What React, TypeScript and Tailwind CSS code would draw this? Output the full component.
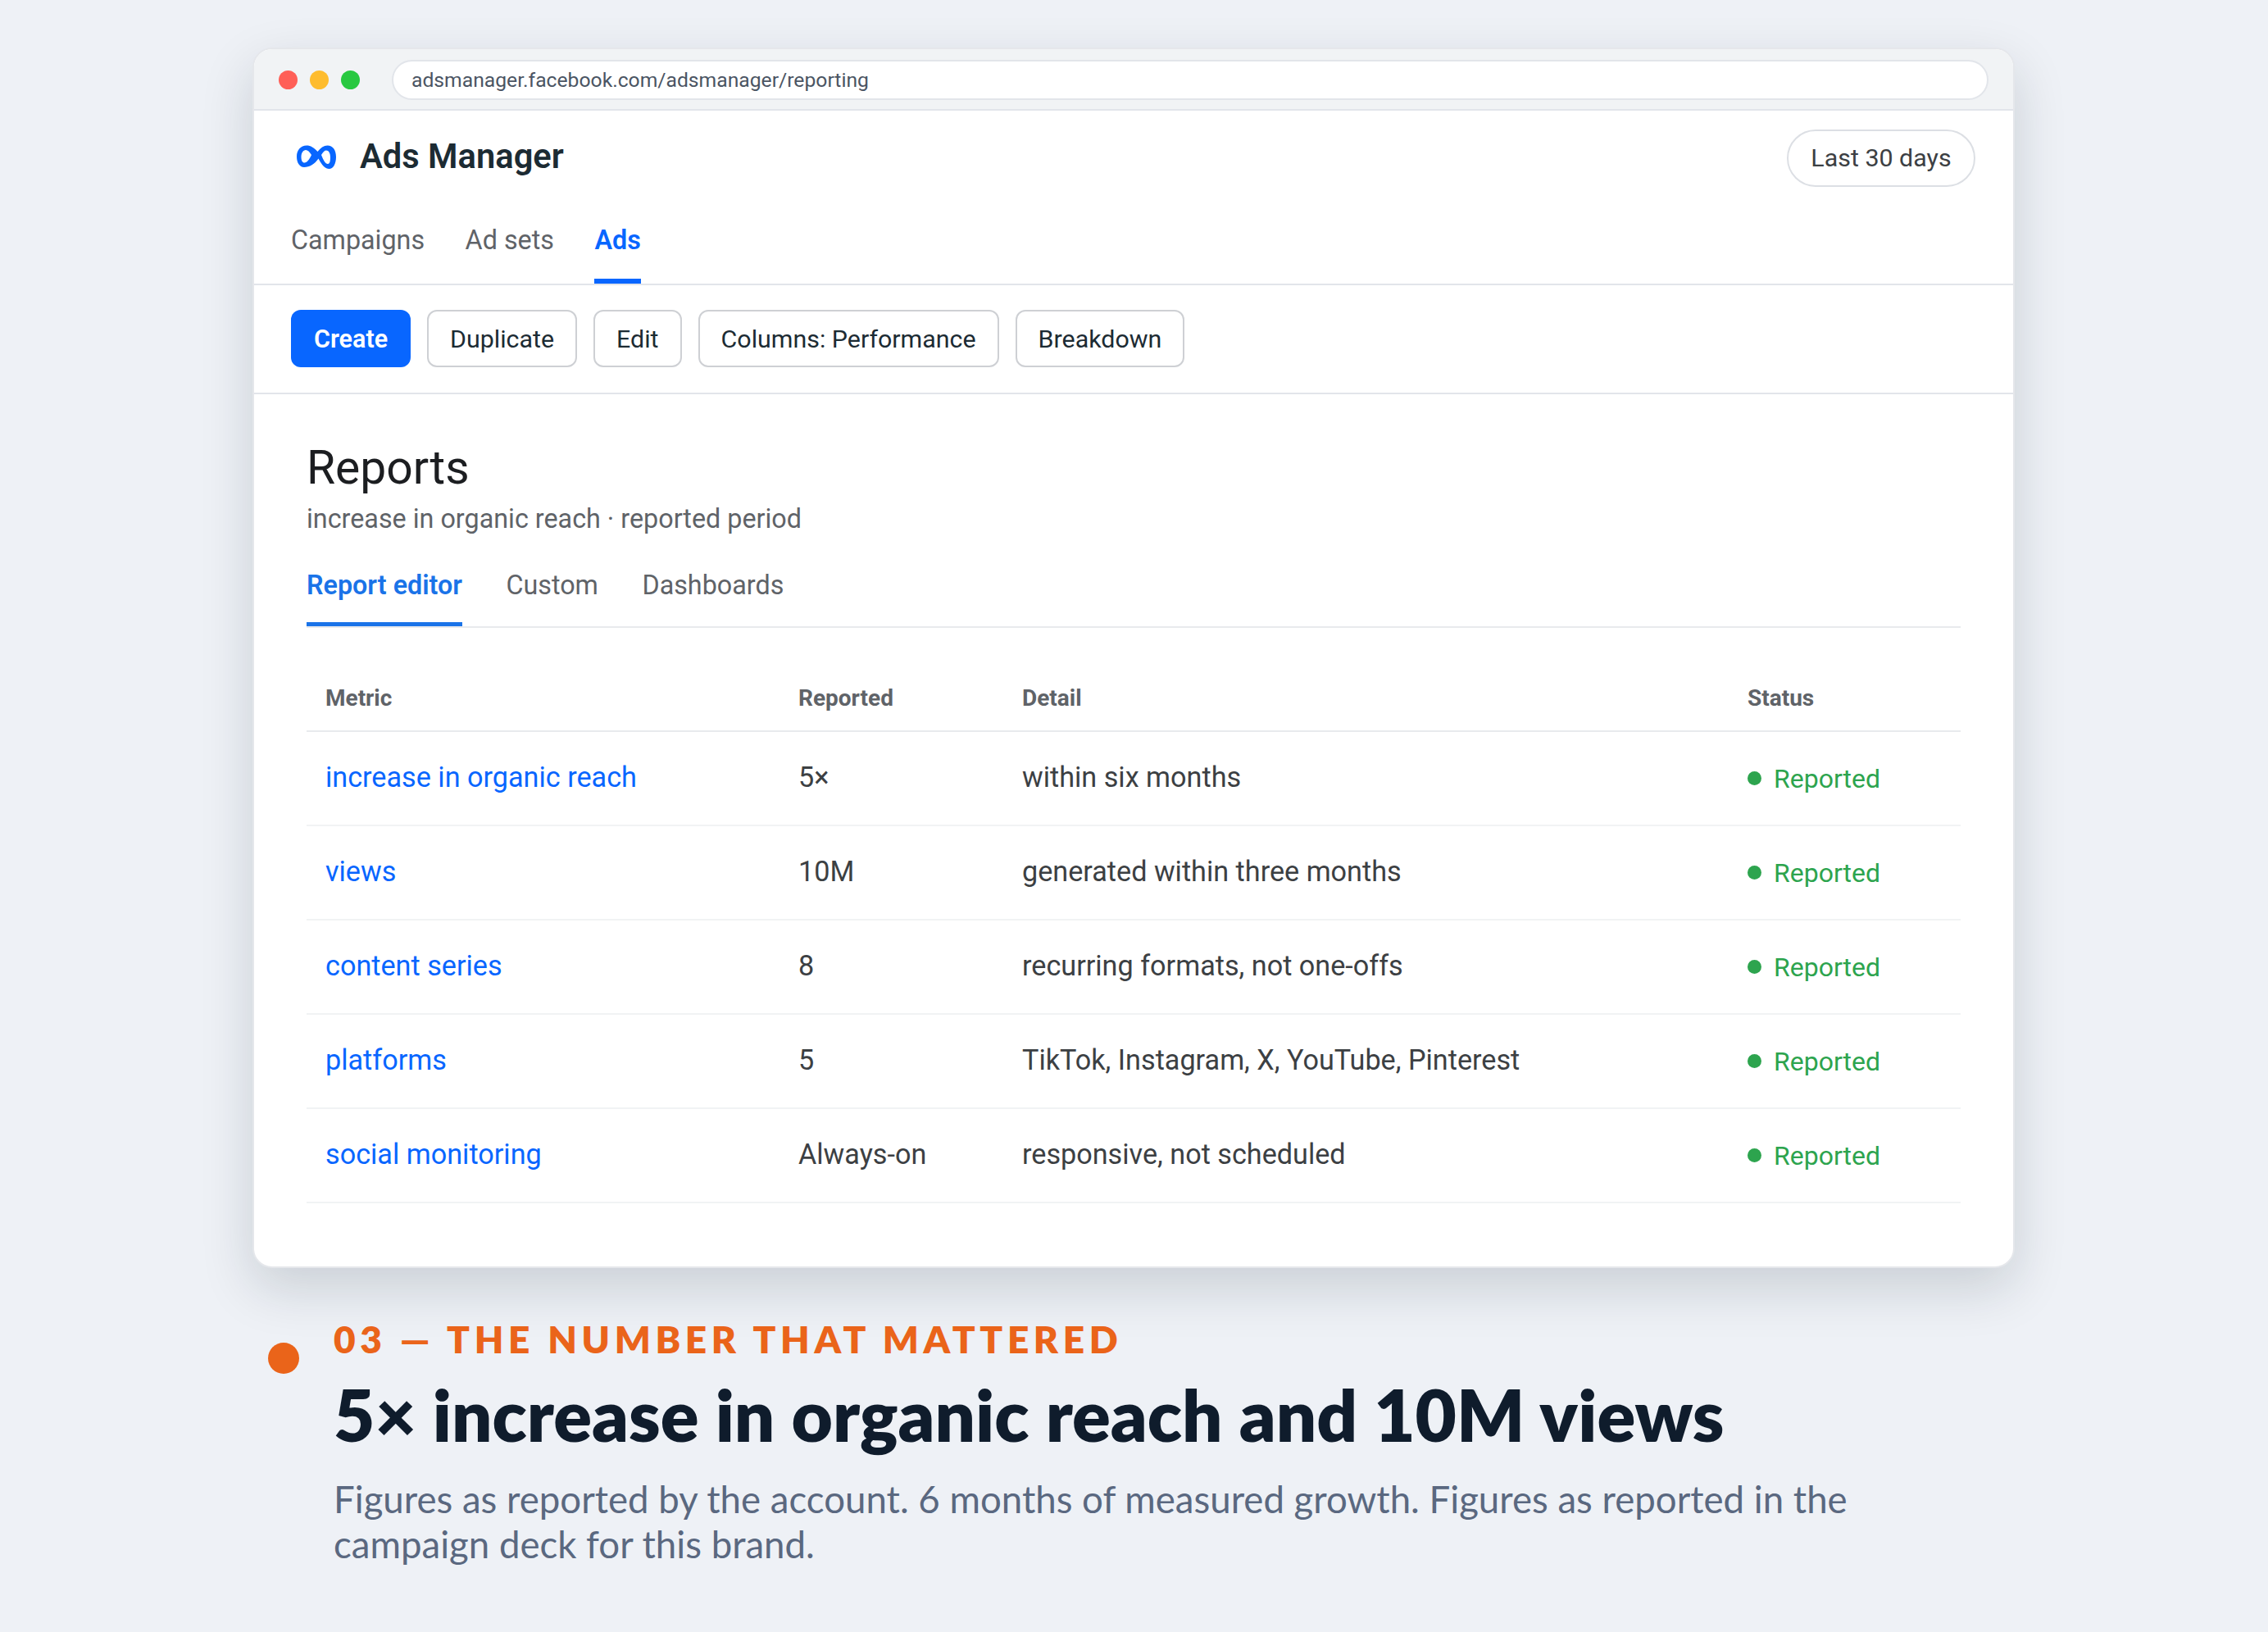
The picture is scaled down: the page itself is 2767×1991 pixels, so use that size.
const tabs = ["Campaigns", "Ad sets"];
const actions = ["Duplicate", "Edit", "Columns: Performance", "Breakdown"];

const rows = [
  { metric: "increase in organic reach", reported: "5×", detail: "within six months" },
  { metric: "views", reported: "10M", detail: "generated within three months" },
  { metric: "content series", reported: "8", detail: "recurring formats, not one-offs" },
  { metric: "platforms", reported: "5", detail: "TikTok, Instagram, X, YouTube, Pinterest" },
  { metric: "social monitoring", reported: "Always-on", detail: "responsive, not scheduled" },
];

function MetaLogo() {
  return (
    <svg viewBox="0 0 48 29" className="h-[29px] w-[48px]">
      <path
        fill="#0866ff"
        fillRule="evenodd"
        d="M12 .5C17 .5 21 3 25.5 8C29 3.5 33 .5 37.5 .5C44 .5 48 6 48 14.5C48 23 44.5 29 39.5 29C35 29 31 25 26.5 16.5C22 23 15.5 27 9 27C3.5 27 0 21.5 0 14C0 6 5 .5 12 .5ZM11 6C8 6 5.5 9.5 5.5 14.5C5.5 19 7 21.5 9.5 21.5C12.5 21.5 15.5 17.5 18 12C15.5 8 13.5 6 11 6ZM36 6.5C34 6.5 32 8.5 30 12C32.5 18.5 35 23 38 23C40 23 41 20 41 15C41 9.5 39 6.5 36 6.5Z"
      />
    </svg>
  );
}

export default function App() {
  return (
    <div className="h-[1991px] w-[2767px] overflow-hidden bg-[#eef1f6] pl-[308px] pt-[58px] font-['Roboto',sans-serif]">
      <div className="h-[1489px] w-[2150px] overflow-hidden rounded-[24px] border-2 border-[#e5e7eb] bg-white shadow-[0_24px_64px_rgba(15,28,44,0.16)]">
        <div className="flex h-[75px] items-center border-b-2 border-[#e2e5ea] bg-[#f1f3f5] pl-[30px] pr-[30px] pt-[1px]">
          <div className="flex gap-[15px]">
            <span className="h-[23px] w-[23px] rounded-full bg-[#ff5f57]" />
            <span className="h-[23px] w-[23px] rounded-full bg-[#febc2e]" />
            <span className="h-[23px] w-[23px] rounded-full bg-[#28c840]" />
          </div>
          <div className="ml-[39px] flex h-[49px] flex-1 items-center rounded-full border-2 border-[#e2e5ea] bg-white pl-[22px] pt-[1px] text-[24.7px] text-[#4b5563]">
            adsmanager.facebook.com/adsmanager/reporting
          </div>
        </div>

        <div className="h-[213px] border-b-2 border-[#e2e5ea] pl-[45px] pr-[46px]">
          <div className="flex items-start justify-between">
            <div className="flex items-center pl-[7px] pt-[27px]">
              <MetaLogo />
              <span className="ml-[29px] text-[41.7px] font-semibold leading-[58px] text-[#1c2b33]">Ads Manager</span>
            </div>
            <div className="mt-[23px] flex h-[70px] w-[230px] items-center justify-center rounded-full border-2 border-[#dcdfe4] text-[30.4px] text-[#3c4043]">
              Last 30 days
            </div>
          </div>
          <div className="mt-[41px] flex gap-[49.5px] text-[32.3px]">
            {tabs.map((t) => (
              <span key={t} className="pb-[29px] leading-[48px] text-[#5f6368]">{t}</span>
            ))}
            <span className="border-b-[6px] border-[#0866ff] pb-[23px] font-semibold leading-[48px] text-[#0866ff]">Ads</span>
          </div>
        </div>

        <div className="flex h-[133px] items-start gap-[20px] border-b-2 border-[#e2e5ea] px-[45px] pt-[30px]">
          <button className="h-[70px] w-[146px] rounded-[12px] bg-[#0866ff] pt-[2px] text-[30.5px] font-semibold text-white">Create</button>
          {actions.map((a) => (
            <button key={a} className="h-[70px] rounded-[12px] border-2 border-[#ced0d4] bg-white px-[26px] pt-[2px] text-[30.4px] text-[#1c2b33]">{a}</button>
          ))}
        </div>

        <div className="pl-[64px] pr-[64px] pt-[54px]">
          <h1 className="text-[57px] font-normal leading-[72px] text-[#1c1e21]">Reports</h1>
          <p className="mt-[4px] text-[32.3px] leading-[44px] text-[#5f6368]">increase in organic reach · reported period</p>
          <div className="mt-[28px] flex h-[83px] gap-[53.5px] border-b-2 border-[#e8eaed] text-[32.3px]">
            <span className="h-[81px] border-b-[5px] border-[#1a73e8] pt-[9px] font-semibold leading-[44px] text-[#1a73e8]">Report editor</span>
            <span className="pt-[9px] leading-[44px] text-[#5f6368]">Custom</span>
            <span className="pt-[9px] leading-[44px] text-[#5f6368]">Dashboards</span>
          </div>

          <table className="mt-[28px] w-full table-fixed border-collapse text-left">
            <thead>
              <tr className="h-[98px] border-b-2 border-[#e8eaed] text-[28px] text-[#5f6368]">
                <th className="w-[577px] pl-[23px] pt-[18px] font-bold">Metric</th>
                <th className="w-[273px] pl-[23px] pt-[18px] font-bold">Reported</th>
                <th className="w-[885px] pl-[23px] pt-[18px] font-bold">Detail</th>
                <th className="w-[283px] pl-[23px] pt-[18px] font-bold">Status</th>
              </tr>
            </thead>
            <tbody>
              {rows.map((r) => (
                <tr key={r.metric} className="h-[115px] border-b-2 border-[#f1f3f4] text-[34.2px] text-[#3c4043]">
                  <td className="pb-[1px] pl-[23px] text-[#0866ff]">{r.metric}</td>
                  <td className="pb-[1px] pl-[23px]">{r.reported}</td>
                  <td className="pb-[1px] pl-[23px]">{r.detail}</td>
                  <td className="pl-[23px]">
                    <span className="flex items-center gap-[15px] text-[32px] text-[#2da44e]">
                      <span className="h-[17px] w-[17px] rounded-full bg-[#2da44e]" />
                      Reported
                    </span>
                  </td>
                </tr>
              ))}
            </tbody>
          </table>
        </div>
      </div>

      <div className="relative mt-[59px] pl-[99px] font-['Lato',sans-serif]">
        <span className="absolute left-[19px] top-[32px] h-[38px] w-[38px] rounded-full bg-[#ea641a]" />
        <div className="text-[46px] font-extrabold leading-[56px] tracking-[5.6px] text-[#ea641a]">03 — THE NUMBER THAT MATTERED</div>
        <div className="mt-[11px] text-[86.9px] font-extrabold leading-[106px] text-[#0f1c2c]">5× increase in organic reach and 10M views</div>
        <p className="mt-[22px] w-[1960px] text-[45.6px] leading-[55px] text-[#5a6880]">
          Figures as reported by the account. 6 months of measured growth. Figures as reported in the campaign deck for this brand.
        </p>
      </div>
    </div>
  );
}
